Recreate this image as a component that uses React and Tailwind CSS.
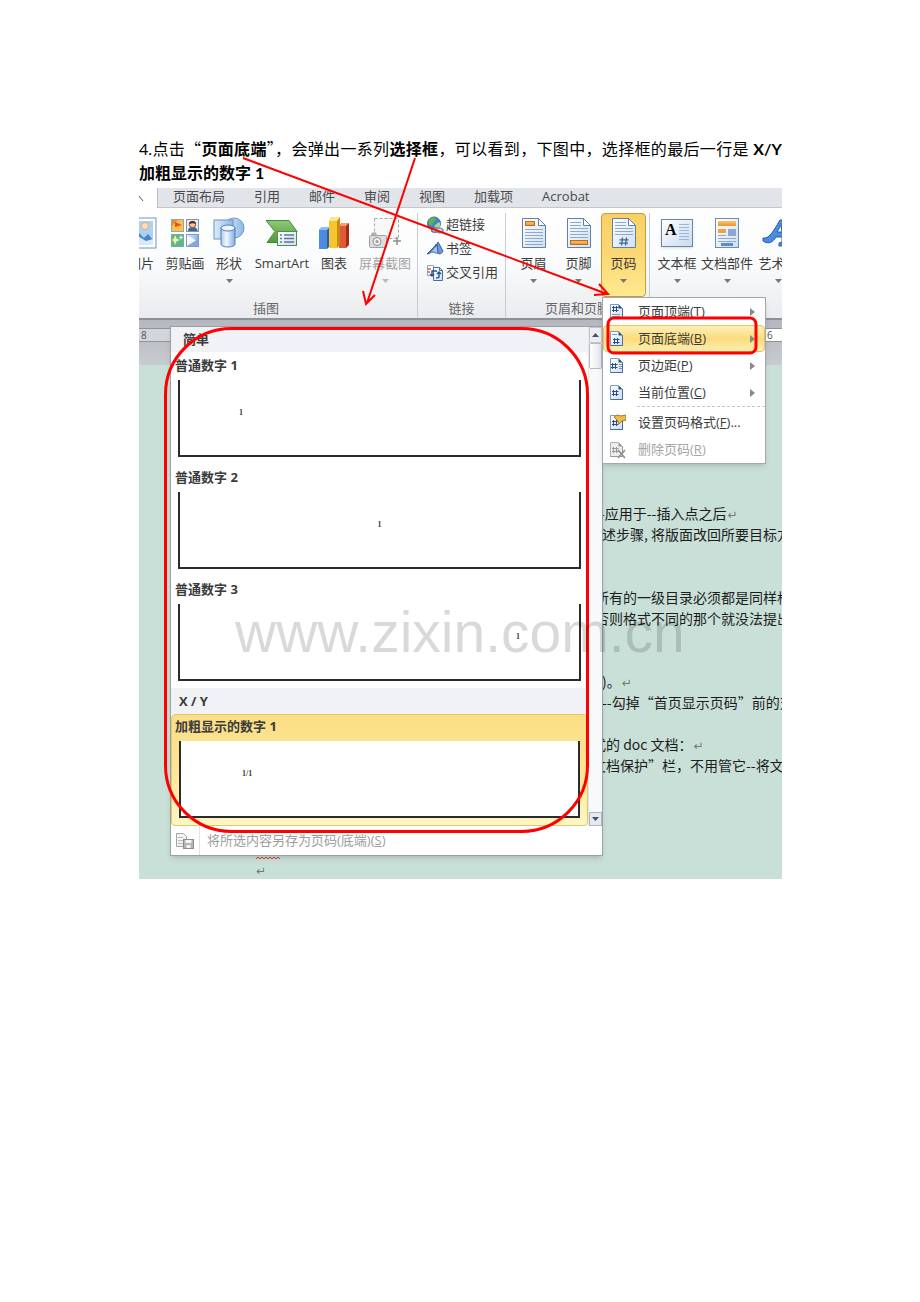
import React from 'react';

const tabs = ['页面布局', '引用', '邮件', '审阅', '视图', '加载项', 'Acrobat'];

const galleryItems = [
  { title: '普通数字 1', num: '1', align: 'justify-start pl-[59px]' },
  { title: '普通数字 2', num: '1', align: 'justify-center' },
  { title: '普通数字 3', num: '1', align: 'justify-end pr-[59px]' },
];

const menuItems = [
  { label: '页面顶端', hotkey: 'T', arrow: true, mark: 'top' },
  { label: '页面底端', hotkey: 'B', arrow: true, mark: 'bottom', active: true },
  { label: '页边距', hotkey: 'P', arrow: true, mark: 'margin' },
  { label: '当前位置', hotkey: 'C', arrow: true, mark: 'current' },
  { divider: true },
  { label: '设置页码格式', hotkey: 'F', tail: '...', mark: 'format' },
  { label: '删除页码', hotkey: 'R', mark: 'remove', disabled: true },
];

const docLines = [
  { text: '--应用于--插入点之后', end: true, pad: 'pl-[456px]' },
  { text: '述步骤, 将版面改回所要目标方向', pad: 'pl-[463px]' },
  {},
  {},
  { text: '所有的一级目录必须都是同样格式', pad: 'pl-[456px]' },
  { text: '否则格式不同的那个就没法提出来', pad: 'pl-[456px]' },
  {},
  {},
  { text: ')。', end: true, pad: 'pl-[463px]' },
  { text: '--勾掉“首页显示页码”前的对勾', pad: 'pl-[463px]' },
  {},
  { text: '式的 doc 文档：', end: true, pad: 'pl-[453px]' },
  { text: '文档保护”栏，不用管它--将文档', pad: 'pl-[453px]' },
  {},
  {},
  {},
];

/* ---------- icons ---------- */

const Gradients = () => (
  <svg className="absolute h-0 w-0" aria-hidden="true">
    <defs>
      <linearGradient id="paper" x1="0" y1="0" x2="1" y2="1">
        <stop offset="0" stopColor="#ffffff" />
        <stop offset="1" stopColor="#cfdff0" />
      </linearGradient>
      <linearGradient id="blue" x1="0" y1="0" x2="1" y2="0">
        <stop offset="0" stopColor="#dcecfb" />
        <stop offset="1" stopColor="#8fb8e4" />
      </linearGradient>
      <linearGradient id="cylinder" x1="0" y1="0" x2="1" y2="0">
        <stop offset="0" stopColor="#a9cbee" />
        <stop offset="0.4" stopColor="#f2f8ff" />
        <stop offset="1" stopColor="#7fadde" />
      </linearGradient>
      <linearGradient id="green" x1="0" y1="0" x2="0" y2="1">
        <stop offset="0" stopColor="#8fc877" />
        <stop offset="1" stopColor="#4e9a3c" />
      </linearGradient>
      <linearGradient id="orange" x1="0" y1="0" x2="0" y2="1">
        <stop offset="0" stopColor="#fbc56b" />
        <stop offset="1" stopColor="#ee9230" />
      </linearGradient>
    </defs>
  </svg>
);

const PictureIcon = () => (
  <svg width="32" height="32" viewBox="0 0 32 32">
    <rect x="1" y="1" width="30" height="30" fill="#fff" stroke="#7b93b5" />
    <rect x="4" y="4" width="24" height="24" fill="#a9d2f5" />
    <circle cx="20" cy="9" r="3.500" fill="#fbe0b8" stroke="#e9a66a" />
    <path d="M4 24l9-9 6 6 4-4 5 6v5H4z" fill="#4b83c4" />
    <path d="M4 28v-3l9-6 8 5 7-2v6z" fill="#d8eafa" />
  </svg>
);

const ClipArtIcon = () => (
  <svg width="32" height="32" viewBox="0 0 32 32">
    <rect x="2.500" y="2.500" width="12" height="12" fill="#fbc04c" stroke="#97a4b6" />
    <path d="M3 3h6l-6 6z" fill="#f08a2b" />
    <path d="M6 12V5l7 3-7 2" fill="#e8511d" />
    <rect x="17.500" y="2.500" width="12" height="12" fill="#e8edf4" stroke="#8794a8" />
    <path d="M19 14c0-3 2-4 4.500-4s5 1 5 4z" fill="#3e65a8" />
    <circle cx="23.500" cy="7.500" r="3.200" fill="#f3c59b" stroke="#8b4a26" />
    <path d="M20 7c0-4 7-4 7 0-2-1-4-1-7 0z" fill="#4c2c1d" />
    <rect x="2.500" y="17.500" width="12" height="12" fill="#58b98c" stroke="#81a99a" />
    <path d="M6 18l1.500 3.500L11 23l-3.500 1.500L6 28l-1-3.500L3 23l2-1.500z" fill="#fbf5a8" />
    <path d="M12 18l.6 1.800 1.900.7-1.900.8L12 23l-.7-1.700-1.800-.8 1.800-.7z" fill="#fff" />
    <rect x="17.500" y="17.500" width="12" height="12" fill="url(#blue)" stroke="#8799bd" />
    <path d="M18 18l9 5.500-9 6z" fill="#f4f9ff" />
    <path d="M27 23.500l2-5.500v11H18z" fill="#82a8e2" />
  </svg>
);

const ShapesIcon = () => (
  <svg width="32" height="32" viewBox="0 0 32 32">
    <circle cx="21" cy="11" r="10" fill="url(#blue)" stroke="#7096c2" />
    <rect x="1" y="3" width="19" height="19" fill="url(#blue)" stroke="#6d92bd" />
    <path d="M8 11v16c0 4 14 4 14 0V11z" fill="url(#cylinder)" stroke="#557fb3" />
    <ellipse cx="15" cy="11" rx="7" ry="3" fill="#eaf4ff" stroke="#557fb3" />
  </svg>
);

const SmartArtIcon = () => (
  <svg width="36" height="32" viewBox="0 0 36 32">
    <path d="M2 3.500h23l8 11-6 11H3l8-11z" fill="url(#green)" stroke="#458a37" />
    <rect x="13.500" y="14.500" width="19" height="14" fill="url(#paper)" stroke="#4f9242" />
    <path d="M16 18h2M20 18h10M16 21.500h2M20 21.500h10M16 25h2M20 25h10" stroke="#5a7a9d" strokeWidth="1.500" />
  </svg>
);

const ChartIcon = () => (
  <svg width="32" height="34" viewBox="0 0 32 34">
    <path d="M1 14l3-3h8v19l-3 3H1z" fill="#2460ae" />
    <path d="M1 14h8v19H1z" fill="#4b8be0" />
    <path d="M1 14l3-3h8l-3 3z" fill="#8cbcf4" />
    <path d="M21 10l3-3h7v22l-3 3h-7z" fill="#a72a13" />
    <path d="M21 10h7v22h-7z" fill="#e2583a" />
    <path d="M21 10l3-3h7l-3 3z" fill="#f79d82" />
    <path d="M11 5l3-4h8v28l-3 3h-8z" fill="#c88d0b" />
    <path d="M11 5h8v27h-8z" fill="#f6c530" />
    <path d="M11 5l3-4h8l-3 4z" fill="#ffe68a" />
  </svg>
);

const ScreenshotIcon = () => (
  <svg width="34" height="32" viewBox="0 0 34 32" fill="none">
    <rect x="6.500" y="1.500" width="24" height="20" stroke="#a9a9a9" strokeDasharray="3 2" fill="#f8f8f8" />
    <rect x="1.500" y="18.500" width="17" height="12" rx="1" fill="#dcdcdc" stroke="#a2a2a2" />
    <path d="M4 18v-2h4v2" fill="#bbb" stroke="#a2a2a2" />
    <circle cx="9" cy="24.500" r="4" fill="#f0f0f0" stroke="#8e8e8e" />
    <circle cx="9" cy="24.500" r="1.500" fill="#999" />
    <path d="M25 24h8M29 20v8" stroke="#8f8f8f" strokeWidth="1.500" />
  </svg>
);

const HyperlinkIcon = () => (
  <svg width="18" height="18" viewBox="0 0 18 18">
    <circle cx="8" cy="7.500" r="6.500" fill="#3a84cc" stroke="#3c6b99" />
    <path d="M4 3c3-3 7-1 6 1S7 6 7 8s-3 2-4 0-1-3 1-5z" fill="#5fb24a" />
    <path d="M9 9c2-1 4-4 5-2s-1 6-3 6-3-3-2-4z" fill="#a5d98b" />
    <ellipse cx="9" cy="14" rx="3.500" ry="2.200" fill="#e4ebf3" stroke="#5f7894" strokeWidth="1.500" />
    <ellipse cx="13.500" cy="14.500" rx="3.500" ry="2.200" fill="#e4ebf3" stroke="#8096ad" strokeWidth="1.500" />
  </svg>
);

const BookmarkIcon = () => (
  <svg width="18" height="16" viewBox="0 0 18 16">
    <path d="M9 4c2 0 2-2 3-3l5 9c-1 2-2 3-4 3z" fill="#6d97d6" stroke="#3c62a3" />
    <path d="M1 13L11 3l1 9c-2 1-3-1-5-1s-4 2-6 2z" fill="#a9c6ec" stroke="#3c62a3" />
    <path d="M1 13c3-2 7-5 10-9" fill="none" stroke="#2f5596" />
  </svg>
);

const CrossRefIcon = () => (
  <svg width="18" height="18" viewBox="0 0 18 18">
    <path d="M1.500 1.500h6v10h-6z" fill="#fff" stroke="#8ea3bd" />
    <path d="M7.500 3.500h6l3 3v10h-9z" fill="url(#paper)" stroke="#4c6d96" />
    <path d="M13.500 3.500v3h3" fill="none" stroke="#4c6d96" />
    <path d="M2 5h3M2 8h2" stroke="#e2622f" strokeWidth="1.500" />
    <path d="M11 7h-5v5M4 10l2 2 2-2M13 8v5c0 1-1 1-3 1M11 10l2-2 2 2" fill="none" stroke="#24509a" strokeWidth="1.400" />
  </svg>
);

// mark: header / footer / number
const PageIcon = ({ mark }) => (
  <svg width="26" height="32" viewBox="0 0 26 32">
    <path d="M1.500 1.500h16l7 7v22h-23z" fill="url(#paper)" stroke="#6280a7" />
    <path d="M17.500 1.500v7h7z" fill="#fff" stroke="#6280a7" />
    {mark !== 'header' && <path d="M4 5.500h11M4 8.500h11M4 11.500h18M4 14.500h18" stroke="#8fa9ca" />}
    {mark === 'header' && (
      <>
        <rect x="4.500" y="4.500" width="9" height="4" fill="url(#orange)" stroke="#c06a1d" />
        <path d="M4 12.500h18M4 15.500h18M4 18.500h18M4 21.500h18M4 24.500h18M4 27.500h18" stroke="#8fa9ca" />
      </>
    )}
    {mark === 'footer' && (
      <>
        <path d="M4 17.500h18M4 20.500h18" stroke="#8fa9ca" />
        <rect x="4.500" y="23.500" width="17" height="4" fill="url(#orange)" stroke="#c06a1d" />
      </>
    )}
    {mark === 'number' && (
      <>
        <path d="M4 17.500h18" stroke="#8fa9ca" />
        <path d="M11.500 20.500l-1 8M15.500 20.500l-1 8M8.500 22.800h9M8 26.200h9" stroke="#3f6597" strokeWidth="1.300" />
      </>
    )}
  </svg>
);

const TextBoxIcon = () => (
  <span className="flex h-7 w-8 border border-[#6e87a8] bg-linear-to-br from-white to-[#c9dbee] pl-[3px] shadow-sm">
    <span className="font-['Liberation_Serif',serif] text-base leading-5 font-bold text-black">A</span>
    <svg width="14" height="26" viewBox="0 0 14 26">
      <path d="M2 4.500h10M2 7.500h10M2 10.500h10M2 13.500h10M2 16.500h10M2 19.500h10" stroke="#9cb6d6" />
    </svg>
  </span>
);

const PartsIcon = () => (
  <svg width="26" height="32" viewBox="0 0 26 32">
    <rect x="1.500" y="1.500" width="23" height="29" fill="url(#paper)" stroke="#6f8bb0" />
    <rect x="4" y="4" width="18" height="5" fill="url(#orange)" />
    <rect x="4" y="12" width="8" height="4" fill="#f3a13f" />
    <rect x="14" y="12" width="8" height="7" fill="#8aa8cf" />
    <path d="M4 18.500h8M4 21.500h18M4 24.500h18" stroke="#8fa9ca" />
    <rect x="7" y="26" width="12" height="3" fill="#5d8ccc" />
  </svg>
);

const WordArtIcon = () => (
  <svg width="32" height="32" viewBox="0 0 32 32">
    <path
      d="M1 21c6 1 10-6 17-18h5l1 22 5 1v3H17v-3l3-1v-5h-6c-3 5-7 8-13 4zM15 15h5l-1-7z"
      fill="#4a8ae0"
      stroke="#2b5da8"
    />
  </svg>
);

const SmallPage = ({ mark }) => {
  const gray = mark === 'remove';
  const line = gray ? '#b0b0b0' : '#7d9abf';
  const dark = gray ? '#999999' : '#2b5088';
  const y = mark === 'top' ? 0 : mark === 'bottom' ? 5 : 3;
  const x = mark === 'margin' ? -1 : mark === 'bottom' ? 1 : 0;
  return (
    <svg width="18" height="18" viewBox="0 0 18 18" fill="none">
      <path d="M2.500 1.500h8l4 4v10h-12z" fill={gray ? '#ededed' : 'url(#paper)'} stroke={line} />
      <path d="M14.500 5.500v10h-12" stroke={gray ? '#999999' : '#4a6c9b'} />
      <path d="M10.500 1.500l4 4h-4z" fill={dark} />
      <g transform={`translate(${x} ${y})`} stroke={dark}>
        <path d="M5.500 3v6M8.500 3v6M4 4.500h6.500M4 7.500h6.500" />
      </g>
      {mark === 'margin' && <path d="M11 7.500h3M11 9.500h3M11 11.500h3" stroke={line} />}
      {mark === 'bottom' && <path d="M4 4.500h5" stroke={line} />}
      {mark === 'top' && <path d="M4 11.500h8M4 13.500h8" stroke={line} />}
      {mark === 'format' && (
        <path d="M6 3l3-2 4 1 5-1v5l-4 1-3 3-2-4z" fill="#efbd45" stroke="#a87a22" />
      )}
      {gray && <path d="M10 9l7 8M17 9l-7 8" stroke="#8f8f8f" strokeWidth="1.600" />}
    </svg>
  );
};

const SaveIcon = () => (
  <svg width="20" height="18" viewBox="0 0 20 18" fill="none">
    <path d="M1.500 1.500h7l3 3v10h-10z" fill="#f2f2f2" stroke="#a5a5a5" />
    <path d="M3 5.500h5M3 8.500h5M3 11.500h5" stroke="#bbbbbb" />
    <rect x="8.500" y="7.500" width="10" height="9" fill="#b5b5b5" stroke="#8c8c8c" />
    <path d="M10.500 8h6v3h-6zM11.500 13h4v3h-4z" fill="#f5f5f5" />
  </svg>
);

const Triangle = ({ className }) => (
  <svg width="7" height="4" viewBox="0 0 7 4" className={className}>
    <path d="M0 0h7L3.500 4z" fill="currentColor" />
  </svg>
);

/* ---------- ribbon ---------- */

const BigButton = ({ icon, label, width, drop, active, disabled }) => (
  <button
    disabled={disabled}
    className={`flex h-[84px] shrink-0 flex-col items-center whitespace-nowrap pt-[2px] ${width} ${
      active
        ? 'rounded-sm border border-[#c79a3a] bg-linear-to-b from-[#f9d065] via-[#fbd874] to-[#ffe98f]'
        : 'border border-transparent'
    } ${disabled ? 'text-[#a5a5a5]' : 'text-[#3b3b3b]'}`}
  >
    <span className="flex h-[34px] items-center">{icon}</span>
    <span className="mt-[3px] leading-5">{label}</span>
    {drop && <Triangle className={disabled ? 'mt-[6px] text-[#bbbbbb]' : 'mt-[6px] text-[#777777]'} />}
  </button>
);

const Group = ({ label, width, children }) => (
  <section className={`flex shrink-0 flex-col border-r border-[#c9cdd2] ${width}`}>
    <div className="flex h-[87px]">{children}</div>
    <div className="text-center leading-5 whitespace-nowrap text-[#666666]">{label}</div>
  </section>
);

const Ribbon = () => (
  <div>
    <nav className="flex h-5 items-start gap-[29px] border-b border-[#c3c7cc] bg-[#e1e4e8] text-[#4a4a4a]">
      <span className="-mr-[14px] flex h-5 w-[19px] items-start border-r border-[#b9bec5] bg-white">
        <svg width="6" height="16" viewBox="0 0 6 16">
          <path d="M0 8l4 5" stroke="#555555" />
        </svg>
      </span>
      {tabs.map((tab) => (
        <button key={tab} className="leading-4 whitespace-nowrap">
          {tab}
        </button>
      ))}
    </nav>
    <div className="flex h-28 overflow-hidden border-b-2 border-[#8d9299] bg-linear-to-b from-white via-[#fafbfc] to-[#e9ebee] pt-[5px]">
      <Group label={<span className="pr-6">插图</span>} width="w-[279px]">
        <div className="flex w-[23px] shrink-0 justify-end overflow-hidden pr-[5px]">
          <BigButton icon={<PictureIcon />} label="图片" width="w-8" />
        </div>
        <BigButton icon={<ClipArtIcon />} label="剪贴画" width="w-[46px]" />
        <BigButton icon={<ShapesIcon />} label="形状" width="w-[42px]" drop />
        <BigButton icon={<SmartArtIcon />} label="SmartArt" width="w-16" />
        <BigButton icon={<ChartIcon />} label="图表" width="w-10" />
        <BigButton icon={<ScreenshotIcon />} label="屏幕截图" width="w-[62px]" drop disabled />
      </Group>
      <Group label="链接" width="w-[88px]">
        <div className="flex flex-col pl-2 text-[#3b3b3b]">
          <button className="flex h-6 items-center gap-[2px] whitespace-nowrap">
            <HyperlinkIcon />
            超链接
          </button>
          <button className="flex h-6 items-center gap-[2px] whitespace-nowrap">
            <BookmarkIcon />
            书签
          </button>
          <button className="flex h-6 items-center gap-[2px] whitespace-nowrap">
            <CrossRefIcon />
            交叉引用
          </button>
        </div>
      </Group>
      <Group label="页眉和页脚" width="w-36">
        <div className="flex pl-[5px]">
          <BigButton icon={<PageIcon mark="header" />} label="页眉" width="w-[45px]" drop />
          <BigButton icon={<PageIcon mark="footer" />} label="页脚" width="w-[45px]" drop />
          <BigButton icon={<PageIcon mark="number" />} label="页码" width="w-[45px]" drop active />
        </div>
      </Group>
      <div className="flex pl-1">
        <BigButton icon={<TextBoxIcon />} label="文本框" width="w-[46px]" drop />
        <BigButton icon={<PartsIcon />} label="文档部件" width="w-[54px]" drop />
        <BigButton icon={<WordArtIcon />} label="艺术字" width="w-12" drop />
      </div>
    </div>
  </div>
);

/* ---------- document behind the menus ---------- */

const Ruler = () => (
  <div className="h-[45px] bg-linear-to-b from-[#b4b8be] to-[#c8cbd0] pt-2">
    <div className="flex h-[14px] items-center justify-between border-y border-[#8f949b] bg-[#d3d6da] text-[10px] leading-3 text-[#555555]">
      <span className="pl-[2px]">8</span>
      <span className="w-4 bg-white pl-px">6</span>
    </div>
  </div>
);

const Return = () => <span className="ml-px font-['DejaVu_Sans',sans-serif] text-xs text-[#777777]">↵</span>;

const Document = () => (
  <div className="bg-[#c9e0d8] pt-[138px] font-['Noto_Sans_CJK_SC',sans-serif] text-sm text-[#1c1c1c]">
    {docLines.map((line, i) => (
      <p key={i} className={`h-[21px] overflow-hidden leading-[21px] whitespace-nowrap ${line.pad || ''}`}>
        {line.text}
        {line.end && <Return />}
      </p>
    ))}
    <p className="flex h-[21px] items-end pl-[117px]">
      <svg width="24" height="4" viewBox="0 0 24 4" fill="none">
        <path d="M0 3l2-2 2 2 2-2 2 2 2-2 2 2 2-2 2 2 2-2 2 2 2-2 2 2" stroke="#e0383e" />
      </svg>
    </p>
    <p className="h-[19px] pl-[116px] leading-[19px]">
      <Return />
    </p>
  </div>
);

/* ---------- popups ---------- */

const Frame = ({ num, align }) => (
  <span className={`mx-[7px] mt-1 flex h-[77px] border-2 border-t-0 border-[#2b2b2b] bg-white pt-7 font-['Liberation_Serif',serif] text-[8px] leading-[10px] ${align}`}>
    {num}
  </span>
);

const Gallery = () => (
  <div className="absolute top-[138px] left-[31px] w-[433px] border border-[#9ba1a9] bg-white text-[#3a3a3a] shadow-md">
    <div className="flex">
      <div className="min-w-0 flex-1">
        <h3 className="h-[25px] bg-[#f0f2f5] pl-3 leading-[25px]">简单</h3>
        {galleryItems.map((item) => (
          <button key={item.title} className="flex h-28 w-full flex-col items-stretch pt-[2px] text-left font-bold">
            <span className="pl-1 leading-[22px]">{item.title}</span>
            <Frame num={item.num} align={item.align} />
          </button>
        ))}
        <h3 className="h-[26px] bg-[#f0f2f5] pl-2 leading-[26px]">X / Y</h3>
        <button className="flex h-28 w-full flex-col items-stretch rounded-sm border border-[#e3c765] bg-linear-to-b from-[#fbdf86] via-[#fde495] to-[#fdf6c4] text-left font-bold">
          <span className="pl-[3px] leading-[22px]">加粗显示的数字 1</span>
          <Frame num="1/1" align="justify-start pl-[61px]" />
        </button>
      </div>
      <div className="flex w-[14px] flex-col border-l border-[#e4e6ea] bg-[#f8f9fb] text-[#46536e]">
        <button aria-label="向上" className="flex h-4 items-center justify-center border border-[#c3c8d0] bg-[#eceef2]">
          <Triangle className="rotate-180" />
        </button>
        <div className="h-[26px] rounded-xs border border-[#b5bac2] bg-linear-to-r from-white to-[#e3e6eb]" />
        <button aria-label="向下" className="mt-auto flex h-[14px] items-center justify-center border border-[#aeb5c2] bg-[#e6e9ef]">
          <Triangle />
        </button>
      </div>
    </div>
    <button disabled className="flex h-[29px] w-full items-center pl-1 text-[#9d9d9d]">
      <SaveIcon />
      <span className="ml-1 h-full border-l border-[#e2e3e5] pl-[7px] leading-[29px]">
        将所选内容另存为页码(底端)(<u>S</u>)
      </span>
    </button>
  </div>
);

const PageNumberMenu = () => (
  <div className="absolute top-[109px] left-[463px] w-[164px] border border-[#a3a8af] bg-white text-[#3b3b3b] shadow-md">
    {menuItems.map((item, i) =>
      item.divider ? (
        <div key={i} className="ml-[34px] h-[3px] border-t border-dashed border-[#c5c8cc]" />
      ) : (
        <button
          key={i}
          disabled={item.disabled}
          className={`flex h-[27px] w-full items-center border pl-1 whitespace-nowrap ${
            item.active
              ? 'rounded-sm border-[#e5c365] bg-linear-to-b from-[#fdf0b8] via-[#fbdc7c] to-[#fdeeb0]'
              : 'border-transparent'
          } ${item.disabled ? 'text-[#a5a5a5]' : ''}`}
        >
          <SmallPage mark={item.mark} />
          <span className="ml-3 flex-1 text-left">
            {item.label}(<u>{item.hotkey}</u>){item.tail}
          </span>
          {item.arrow && (
            <svg width="5" height="8" viewBox="0 0 5 8" className="mr-[9px]">
              <path d="M0 0v8l5-4z" fill="#888888" />
            </svg>
          )}
        </button>
      ),
    )}
  </div>
);

const Annotations = () => (
  <svg
    className="pointer-events-none absolute top-0 left-0"
    width="643"
    height="743"
    viewBox="139 136 643 743"
    fill="none"
    stroke="#ff0000"
  >
    <rect x="165.500" y="328.500" width="422" height="503" rx="66" strokeWidth="3" />
    <rect x="608" y="318" width="148" height="35" rx="6" strokeWidth="3" />
    <path d="M243 158L607 294M599 284l9 10-14 1" strokeWidth="2" />
    <path d="M415 158L367 303M363 291l3 13 9-9" strokeWidth="2" />
  </svg>
);

const App = () => {
  return (
    <main className="min-h-screen overflow-hidden bg-white pt-[136px] pr-[138px] pl-[139px]">
      <Gradients />
      <article className="relative">
        <div className="h-[52px] font-[Lato,'Noto_Sans_CJK_SC',sans-serif] text-base leading-6 text-black">
          <p className="[text-align-last:justify] whitespace-nowrap">
            4.
            <span className="font-['Noto_Sans_CJK_SC',sans-serif]">
              点击“<b>页面底端</b>”，会弹出一系列<b>选择框</b>，可以看到，下图中，选择框的最后一行是
            </span>{' '}
            <b>X/Y</b>
          </p>
          <p className="font-bold">加粗显示的数字 1</p>
        </div>
        <div className="relative overflow-hidden font-['Open_Sans','Noto_Sans_CJK_SC',sans-serif] text-[13px] [&_h3]:font-bold">
          <Ribbon />
          <Ruler />
          <Document />
          <Gallery />
          <PageNumberMenu />
        </div>
        <Annotations />
        <p className="pointer-events-none absolute top-[464px] left-24 font-['Liberation_Sans',sans-serif] text-[57px] leading-[64px] whitespace-nowrap text-black/15">
          www.zixin.com.cn
        </p>
      </article>
    </main>
  );
};

export default App;
